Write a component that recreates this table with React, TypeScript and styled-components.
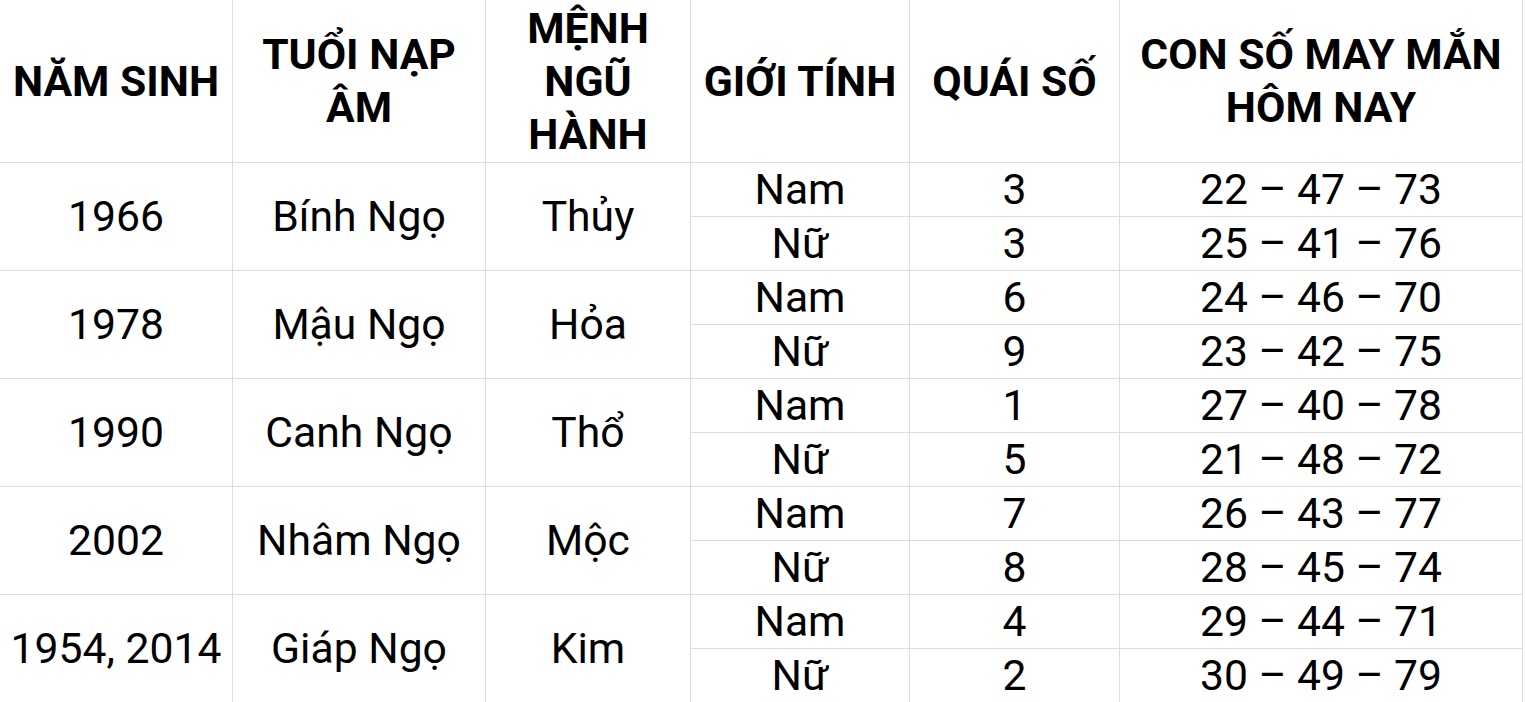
import * as React from 'react';
import styled, { createGlobalStyle } from 'styled-components';

const GlobalStyle = createGlobalStyle`
  html, body {
    margin: 0;
    padding: 0;
    background: #ffffff;
  }
  body {
    font-family: Roboto, 'Noto Sans', Arial, sans-serif;
    color: #000;
    overflow: hidden;
  }
`;

const StyledTable = styled.div`
  display: grid;
  grid-template-columns: 233px 253px 205px 219px 210px 403px;
  grid-template-rows: 163px repeat(10, 54px);
  width: 1523px;
`;

const StyledCell = styled.div<{ $span?: number; $head?: boolean }>`
  display: flex;
  align-items: center;
  justify-content: center;
  text-align: center;
  box-sizing: border-box;
  border-right: 1px solid #dedede;
  border-bottom: 1px solid #dedede;
  font-size: 32pt;
  font-weight: ${(p) => (p.$head ? 700 : 400)};
  line-height: ${(p) => (p.$head ? '53px' : '1')};
  grid-row: ${(p) => (p.$span ? `span ${p.$span}` : 'auto')};
  white-space: ${(p) => (p.$head ? 'normal' : 'nowrap')};
  padding: 0 4px;
`;

const headers = [
  'NĂM SINH',
  'TUỔI NẠP ÂM',
  'MỆNH NGŨ HÀNH',
  'GIỚI TÍNH',
  'QUÁI SỐ',
  'CON SỐ MAY MẮN HÔM NAY',
];

const rows = [
  { year: '1966', tuoi: 'Bính Ngọ', menh: 'Thủy', nam: ['3', '22 – 47 – 73'], nu: ['3', '25 – 41 – 76'] },
  { year: '1978', tuoi: 'Mậu Ngọ', menh: 'Hỏa', nam: ['6', '24 – 46 – 70'], nu: ['9', '23 – 42 – 75'] },
  { year: '1990', tuoi: 'Canh Ngọ', menh: 'Thổ', nam: ['1', '27 – 40 – 78'], nu: ['5', '21 – 48 – 72'] },
  { year: '2002', tuoi: 'Nhâm Ngọ', menh: 'Mộc', nam: ['7', '26 – 43 – 77'], nu: ['8', '28 – 45 – 74'] },
  { year: '1954, 2014', tuoi: 'Giáp Ngọ', menh: 'Kim', nam: ['4', '29 – 44 – 71'], nu: ['2', '30 – 49 – 79'] },
];

export default function App() {
  return (
    <>
      <GlobalStyle />
      <StyledTable>
        {headers.map((h) => (
          <StyledCell key={h} $head>
            {h}
          </StyledCell>
        ))}
        {rows.map((r) => (
          <React.Fragment key={r.year}>
            <StyledCell $span={2}>{r.year}</StyledCell>
            <StyledCell $span={2}>{r.tuoi}</StyledCell>
            <StyledCell $span={2}>{r.menh}</StyledCell>
            <StyledCell>Nam</StyledCell>
            <StyledCell>{r.nam[0]}</StyledCell>
            <StyledCell>{r.nam[1]}</StyledCell>
            <StyledCell>Nữ</StyledCell>
            <StyledCell>{r.nu[0]}</StyledCell>
            <StyledCell>{r.nu[1]}</StyledCell>
          </React.Fragment>
        ))}
      </StyledTable>
    </>
  );
}
